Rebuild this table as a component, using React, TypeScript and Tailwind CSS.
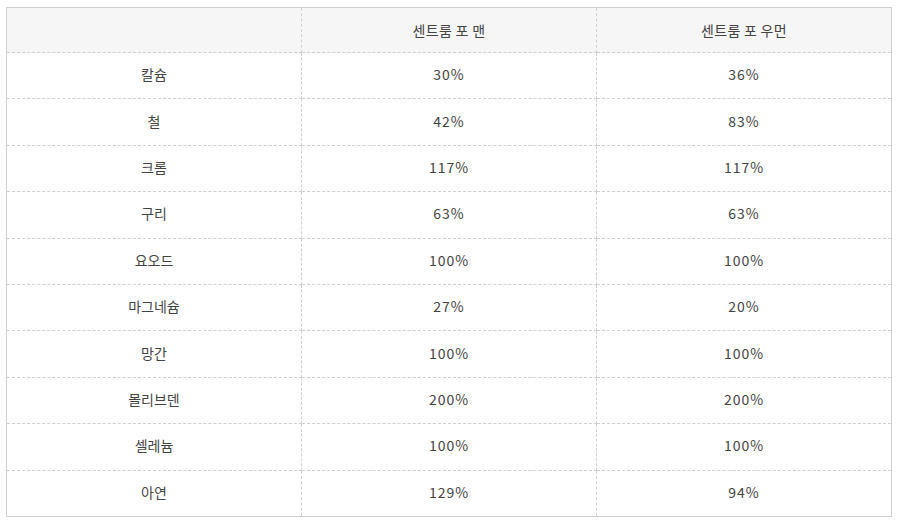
import React from "react";

const rows: [string, string, string][] = [
  ["칼슘", "30%", "36%"],
  ["철", "42%", "83%"],
  ["크롬", "117%", "117%"],
  ["구리", "63%", "63%"],
  ["요오드", "100%", "100%"],
  ["마그네슘", "27%", "20%"],
  ["망간", "100%", "100%"],
  ["몰리브덴", "200%", "200%"],
  ["셀레늄", "100%", "100%"],
  ["아연", "129%", "94%"],
];

export default function App() {
  return (
    <div className="bg-white w-[898px] h-[522px] pt-[7px] pl-[6px]" style={{ fontFamily: '"Noto Sans CJK KR", "Noto Sans", sans-serif' }}>
      <table className="w-[886px] border-collapse border border-solid border-[#d0d0d0] text-[14px] text-[#444] table-fixed">
        <thead>
          <tr className="h-[45px] bg-[#f6f6f6]">
            <th className="w-1/3 font-normal border-r border-b border-dashed border-[#d0d0d0]"></th>
            <th className="w-1/3 font-normal border-r border-b border-dashed border-[#d0d0d0] tracking-[0.3px]">센트룸 포 맨</th>
            <th className="w-1/3 font-normal border-b border-dashed border-[#d0d0d0] tracking-[0.3px]">센트룸 포 우먼</th>
          </tr>
        </thead>
        <tbody>
          {rows.map((r, i) => (
            <tr key={i} className="h-[46.4px]">
              <td className={`text-center pb-[2px] border-r border-dashed border-[#d0d0d0] ${i < rows.length - 1 ? "border-b" : ""}`}>{r[0]}</td>
              <td className={`text-center pb-[2px] tracking-[1px] border-r border-dashed border-[#d0d0d0] ${i < rows.length - 1 ? "border-b" : ""}`}>{r[1]}</td>
              <td className={`text-center pb-[2px] tracking-[1px] border-dashed border-[#d0d0d0] ${i < rows.length - 1 ? "border-b" : ""}`}>{r[2]}</td>
            </tr>
          ))}
        </tbody>
      </table>
    </div>
  );
}
